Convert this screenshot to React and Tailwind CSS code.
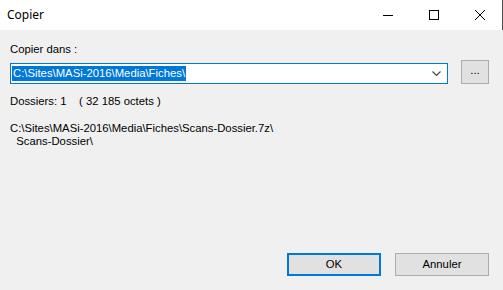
export default function App() {
  return (
    <div className="w-[503px] h-[290px] bg-[#f0f0f0] flex flex-col overflow-hidden font-['Liberation_Sans',Arial,sans-serif] text-[11.3px] text-black">
      {/* title bar */}
      <div className="h-[30px] bg-white flex items-center shrink-0 border-r border-[#4a4a4a]">
        <span className="pl-[7px] text-[12px] font-['Segoe_UI','Noto_Sans',sans-serif] flex-1">Copier</span>
        <div className="w-[46px] h-full flex items-center justify-center">
          <svg width="10" height="10" viewBox="0 0 10 10">
            <line x1="0" y1="5.5" x2="10" y2="5.5" stroke="#000" strokeWidth="1" />
          </svg>
        </div>
        <div className="w-[46px] h-full flex items-center justify-center">
          <svg width="10" height="10" viewBox="0 0 10 10">
            <rect x="0.5" y="0.5" width="9" height="9" fill="none" stroke="#000" strokeWidth="1" />
          </svg>
        </div>
        <div className="w-[45px] h-full flex items-center justify-center">
          <svg width="10" height="10" viewBox="0 0 10 10">
            <path d="M0 0 L10 10 M10 0 L0 10" stroke="#000" strokeWidth="1" />
          </svg>
        </div>
      </div>

      <div className="flex-1 flex flex-col px-[10px]">
        <div className="mt-[13px] leading-[13px]">Copier dans :</div>

        <div className="mt-[4px] flex items-end">
          <div className="w-[438px] h-[21px] bg-white border border-[#0078d7] flex items-center pl-[1px] pr-[6px]">
            <span className="bg-[#0078d7] text-white leading-[15px] px-[1px] flex-1 mr-auto self-center max-w-fit">
              C:\Sites\MASi-2016\Media\Fiches\
            </span>
            <span className="flex-1" />
            <svg width="9" height="6" viewBox="0 0 9 6">
              <path d="M0.5 0.5 L4.5 4.5 L8.5 0.5" fill="none" stroke="#444" strokeWidth="1.1" />
            </svg>
          </div>
          <button className="ml-[13px] w-[28px] h-[24px] bg-[#e1e1e1] border border-[#adadad] flex items-center justify-center leading-none pb-[3px]">
            ...
          </button>
        </div>

        <div className="mt-[11px] leading-[13px] whitespace-pre">Dossiers: 1    ( 32 185 octets )</div>

        <div className="mt-[14px] leading-[13px] whitespace-pre">
          <div>C:\Sites\MASi-2016\Media\Fiches\Scans-Dossier.7z\</div>
          <div>{"  Scans-Dossier\\"}</div>
        </div>

        <div className="flex-1" />

        <div className="flex justify-end gap-[14px] pr-[4px] mb-[14px]">
          <button className="w-[94px] h-[23px] bg-[#e1e1e1] border-2 border-[#0078d7] flex items-center justify-center">
            OK
          </button>
          <button className="w-[94px] h-[23px] bg-[#e1e1e1] border border-[#adadad] flex items-center justify-center">
            Annuler
          </button>
        </div>
      </div>
    </div>
  );
}
